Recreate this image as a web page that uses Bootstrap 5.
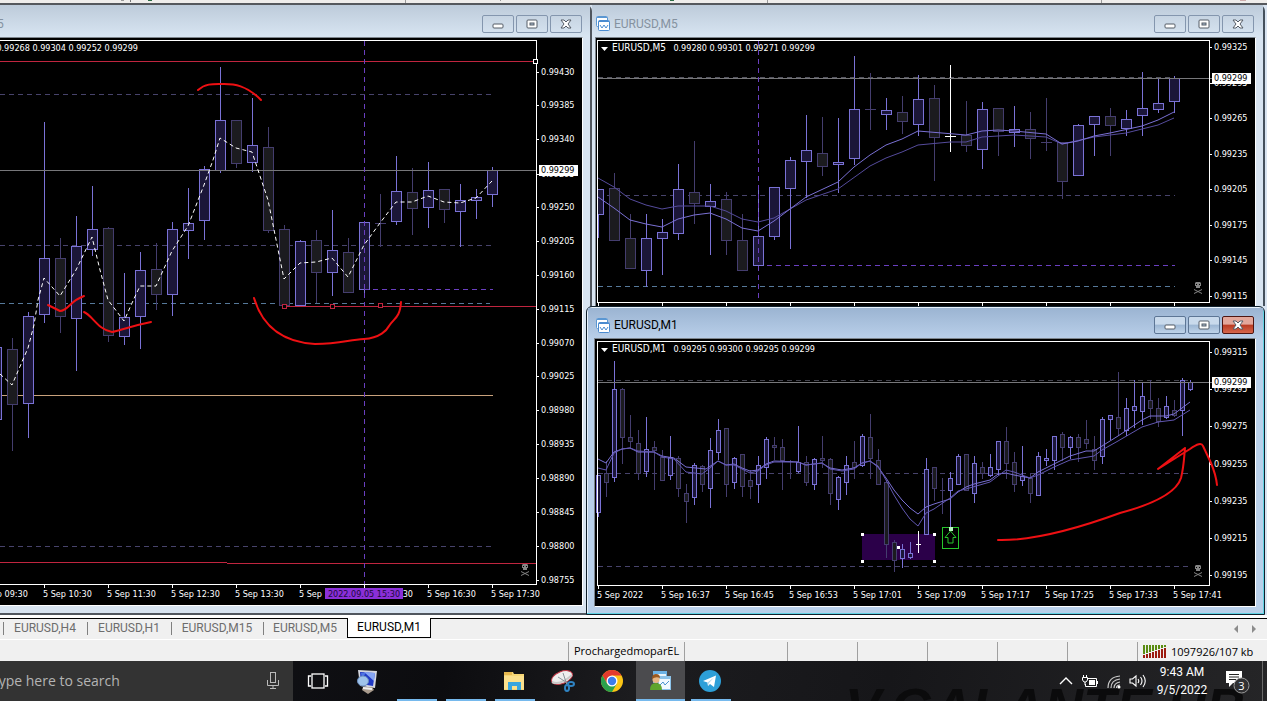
<!DOCTYPE html>
<html lang="en">
<head>
    <meta charset="UTF-8">
    <title>EURUSD Charts</title>
    <meta name="viewport" content="width=device-width, initial-scale=1">
    <!-- Bootstrap 5 -->
    <link href="https://cdn.jsdelivr.net/npm/bootstrap@5.3.3/dist/css/bootstrap.min.css" rel="stylesheet">
    <!-- Custom Styles -->
    <style>
        body {
            background: #f0f0f0;
            font-family: "Open Sans", "Noto Sans", sans-serif;
            font-size: 11px;
            line-height: 16px;
            color: #000;
            overflow-x: hidden;
        }
        .tool-strip { height: 5px; background: #efedeb; border-bottom: 2px solid #55585d; }
        .tool-strip svg { display: block; }

        /* chart windows */
        .workspace { padding-right: 2px; background: #d9e4f1; }
        .pane-left { flex: 592 1 0; min-width: 0; }
        .pane-right { flex: 673 1 0; min-width: 0; }
        .win { background: #d8e4f1; }
        .win-left { border-right: 2px solid #50565e; border-bottom: 2px solid #50565e; border-top-right-radius: 6px; padding: 0 7px 7px 0; }
        .win-m5 { border-right: 2px solid #45505c; border-top-right-radius: 6px; padding: 0 7px 0 3px; }
        .win-m1 {
            margin-left: -6px;
            background: #b9d0ea;
            border: 1px solid #10202c;
            border-radius: 6px 6px 0 0;
            box-shadow: inset -1px -1px 0 #5fd3e4, inset 1px 1px 0 #e8f2fc;
            padding: 0 8px 7px 7px;
            position: relative;
        }
        .win-title { height: 32px; padding: 5px 1px 0 2px; background: linear-gradient(#bdcbda, #d8e5f2); color: #8592a0; font-family: Roboto, "Open Sans", sans-serif; font-size: 12px; }
        .win-left .win-title { margin-right: -7px; padding-right: 8px; }
        .win-m5 .win-title { margin: 0 -7px 0 -3px; padding: 5px 9px 0 4px; }
        .win-m1 .win-title { height: 30px; margin: 1px -7px 0 -6px; padding: 4px 9px 0 8px; background: linear-gradient(#9bb4d2, #b9cfe9); color: #000; }
        .cut-title { margin-left: -62px; }
        .chart-box { border-top: 1px solid #7d858d; border-right: 1px solid #fff; background: #000; }
        .chart-edge { border-left: 1px solid #7d858d; }
        .chart-base { border-bottom: 1px solid #fff; }
        .chart-box svg { display: block; width: 100%; height: auto; }
        .win-btn { width: 32px; height: 18px; padding: 0; border: 1px solid #8496ae; border-radius: 2px; background: transparent; line-height: 0; }
        .win-m1 .win-btn { border-color: #5d7695; background: linear-gradient(#c9daec 45%, #9cb6d3 50%, #bfd4ea); }
        .win-m1 .win-btn.win-close { border-color: #4e1612; background: linear-gradient(#e3a79b 45%, #b93a22 50%, #d6674c); }
        .win-gap { gap: 2px; }
        .chart-box text { font-family: "DejaVu Sans Condensed", "DejaVu Sans", sans-serif; font-size: 9px; fill: #fff; }
        .chart-box text.symbol-name { font-size: 10px; }

        /* tab row and status bar */
        .tab-row { margin-top: 3px; height: 21px; border-top: 1px solid #000; box-shadow: 0 -3px 0 #fff; }
        .chart-tabs { padding-left: 3px; }
        .chart-tab { width: 84px; height: 19px; padding: 0; border: 0; background: none; color: #6d6d6d; text-align: center; font-family: Roboto, "Open Sans", sans-serif; font-size: 12px; line-height: 19px; position: relative; }
        .chart-tab::before { content: ""; position: absolute; left: 0; top: 3px; height: 13px; border-left: 1px solid #808080; }
        .chart-tab.tab-wide { width: 92px; }
        .chart-tab.tab-on { background: #fff; color: #000; border: 1px solid #000; border-top: 0; height: 20px; margin-top: -1px; }
        .chart-tab.tab-on::before { display: none; }
        .tab-arrow { border: 0; padding: 0; background: none; color: #8c8c8c; width: 18px; line-height: 0; }
        .status-row { height: 22px; border-top: 1px solid #fff; }
        .status-cell { flex: none; height: 19px; margin-top: 2px; border-left: 1px solid #a0a0a0; line-height: 18px; white-space: nowrap; }
        .cell-a { width: 116px; padding-left: 5px; }
        .cell-b { width: 103px; }
        .cell-c { width: 70px; }
        .cell-d { width: 130px; padding-left: 5px; }

        /* taskbar */
        .taskbar { height: 40px; background: linear-gradient(100deg, #15161b, #0c0c0f 35%, #1c1c1f 50%, #161619 70%, #252527); color: #fff; position: relative; overflow: hidden; }
        .desk-name { position: absolute; right: 22px; bottom: -33px; font: italic bold 54px/54px "Liberation Sans", sans-serif; color: #0b0b0c; }
        .search-box { width: 293px; background: #333; }
        .search-box input { width: 240px; border: 0; background: transparent; color: #b4b4b4; font-size: 14px; text-indent: -9px; padding: 0; outline: 0; }
        .search-box input::placeholder { color: #b4b4b4; opacity: 1; }
        .search-box button { margin-right: 13px; }
        .task-btn, .tray-btn { border: 0; padding: 0; background: none; color: #fff; display: flex; align-items: center; justify-content: center; position: relative; }
        .task-btn { width: 49px; height: 40px; }
        .task-btn.running::after { content: ""; position: absolute; left: 6px; right: 3px; bottom: 0; height: 2px; background: #76b9ed; }
        .task-btn.active-app { background: #4b4b4e; }
        .task-btn.active-app::after { left: 0; right: 0; }
        .tray-btn { width: 24px; height: 40px; }
        .clock { width: 64px; font-size: 12px; line-height: 18px; text-align: center; padding-top: 2px; font-family: Roboto, "Open Sans", sans-serif; position: relative; }
        .note-btn { width: 48px; }
        .show-desk { width: 5px; border-left: 1px solid #6a6a6a; }
    </style>
</head>
<body>
    <div class="tool-strip">
        <svg width="1267" height="3" shape-rendering="crispEdges" aria-hidden="true">
            <rect x="148" width="4" height="1" fill="#2c6a44"/><rect x="121" width="3" height="1" fill="#999"/><rect x="130" width="1" height="2" fill="#777"/>
            <rect x="405" width="1" height="3" fill="#999"/><rect x="500" width="1" height="1" fill="#999"/><rect x="670" width="4" height="1" fill="#2c6a44"/>
            <rect x="767" width="1" height="3" fill="#999"/><rect x="1101" width="1" height="3" fill="#999"/><rect x="1240" width="6" height="1" fill="#caa"/>
        </svg>
    </div>

    <main class="workspace d-flex">
        <!-- Left chart -->
        <section class="pane-left d-flex flex-column">
            <div class="win win-left">
                <div class="win-title d-flex align-items-center justify-content-between">
                    <span class="cut-title">EURUSD,M5</span>
                    <div class="win-buttons d-flex win-gap"></div>
                </div>
                <div class="chart-box chart-base"><svg id="chart-left" viewBox="0 38 582 567" role="img" aria-label="EURUSD chart"></svg></div>
            </div>
        </section>

        <section class="pane-right d-flex flex-column">
            <!-- M5 chart -->
            <div class="win win-m5">
                <div class="win-title d-flex align-items-center justify-content-between">
                    <div class="d-flex align-items-center gap-1"><span class="win-icon d-flex"></span><span>EURUSD,M5</span></div>
                    <div class="win-buttons d-flex win-gap"></div>
                </div>
                <div class="chart-box chart-edge"><svg id="chart-m5" viewBox="596 38 659 268" role="img" aria-label="EURUSD M5 chart"></svg></div>
            </div>
            <!-- M1 chart -->
            <div class="win win-m1">
                <div class="win-title d-flex align-items-center justify-content-between">
                    <div class="d-flex align-items-center gap-1"><span class="win-icon d-flex"></span><span>EURUSD,M1</span></div>
                    <div class="win-buttons d-flex win-gap"></div>
                </div>
                <div class="chart-box chart-edge chart-base"><svg id="chart-m1" viewBox="595 339 660 267" role="img" aria-label="EURUSD M1 chart"></svg></div>
            </div>
        </section>
    </main>

    <!-- Chart tabs -->
    <div class="tab-row d-flex justify-content-between">
        <div class="chart-tabs d-flex">
            <button type="button" class="chart-tab">EURUSD,H4</button>
            <button type="button" class="chart-tab">EURUSD,H1</button>
            <button type="button" class="chart-tab tab-wide">EURUSD,M15</button>
            <button type="button" class="chart-tab">EURUSD,M5</button>
            <button type="button" class="chart-tab tab-on">EURUSD,M1</button>
        </div>
        <div class="d-flex pe-1">
            <button type="button" class="tab-arrow" aria-label="Previous tab"><svg width="4" height="8"><path d="M4 0V8L0 4Z" fill="currentColor"/></svg></button>
            <button type="button" class="tab-arrow" aria-label="Next tab"><svg width="4" height="8"><path d="M0 0V8L4 4Z" fill="currentColor"/></svg></button>
        </div>
    </div>
    <div class="status-row d-flex justify-content-end">
        <div class="status-cell cell-a">ProchargedmoparEL</div>
        <div class="status-cell cell-b"></div>
        <div class="status-cell cell-c"></div>
        <div class="status-cell cell-c"></div>
        <div class="status-cell cell-c"></div>
        <div class="status-cell cell-c"></div>
        <div class="status-cell cell-c"></div>
        <div class="status-cell cell-d d-flex align-items-center gap-1">
            <svg id="net-bars" width="24" height="13" shape-rendering="crispEdges" aria-hidden="true"></svg>
            <span>1097926/107 kb</span>
        </div>
    </div>

    <!-- Taskbar -->
    <footer class="taskbar d-flex">
        <div class="desk-name" aria-hidden="true">V.GALANTE.UB</div>
        <div class="search-box d-flex align-items-center justify-content-between">
            <input type="text" placeholder="Type here to search" aria-label="Type here to search">
            <button type="button" class="tray-btn w-auto" aria-label="Voice search">
                <svg width="14" height="18" fill="none" stroke="#bbb"><rect x="4.500" y=".5" width="5" height="10"/><path d="M1.500 8v5.500h11V8M7 13.500v3M4 16.500h6"/></svg>
            </button>
        </div>
        <button type="button" class="task-btn" aria-label="Task view">
            <svg width="22" height="16" fill="none" stroke="#fff" stroke-width="1.300"><rect x="5" y="1" width="12" height="14"/><path d="M4 3H1.500v10H4M18 3h2.500v10H18"/></svg>
        </button>
        <button type="button" class="task-btn" aria-label="Remote computer">
            <svg width="24" height="26"><path d="M3 2l19 1-2 17L5 18Z" fill="#d4d6de"/><path d="M5 4l15 1-2 13L6 16Z" fill="#2039c4"/><path d="M9 4l11 1-1 8Z" fill="#86a5f3"/><path d="M6 5l5 0-4 5Z" fill="#4e74e4"/><ellipse cx="8" cy="13" rx="5.500" ry="5" fill="#9fc3ea" stroke="#6c8fc0"/><path d="M8 19h9l2 3-6 4-6-4Z" fill="#a99b8d"/><path d="M8 20l9 1" stroke="#eee" stroke-width="2"/></svg>
        </button>
        <button type="button" class="task-btn running" aria-label="Application"></button>
        <button type="button" class="task-btn running" aria-label="Application"></button>
        <button type="button" class="task-btn running" aria-label="File Explorer">
            <svg width="22" height="20"><path d="M1 1h9l1 2h10v16H1Z" fill="#f6d675"/><path d="M1 1h8v3H1Z" fill="#e6b84e"/><path d="M1 5h20v13H1Z" fill="#fbe08c"/><path d="M5 19v-8h13v8h-4v-4H9v4Z" fill="#38a5de"/></svg>
        </button>
        <button type="button" class="task-btn" aria-label="Snipping Tool">
            <svg width="24" height="24"><ellipse cx="11" cy="8.500" rx="11" ry="6" transform="rotate(-22 11 8.500)" fill="#eee" stroke="#c23a4a"/><path d="M1 13q8 4 20-7" stroke="#c9c9c9" fill="none" stroke-width="2"/><path d="M12 4l4 12M7 8l11 7" stroke="#8a949b"/><g fill="none" stroke="#2f83c3" stroke-width="2"><ellipse cx="16" cy="19" rx="2" ry="3"/><ellipse cx="20" cy="15" rx="3" ry="2"/></g></svg>
        </button>
        <button type="button" class="task-btn" aria-label="Chrome">
            <svg width="22" height="22" viewBox="0 0 22 22"><circle cx="11" cy="11" r="11" fill="#fbc516"/><path d="M1.470 5.500A11 11 0 0 1 20.530 5.500H11L6.240 13.750Z" fill="#e33b2e"/><path d="M1.470 5.500A11 11 0 0 0 11 22L15.760 13.750H6.240Z" fill="#2aa14b"/><circle cx="11" cy="11" r="5.500" fill="#fff"/><circle cx="11" cy="11" r="4.200" fill="#3b7ded"/></svg>
        </button>
        <button type="button" class="task-btn running active-app" aria-label="Trading terminal">
            <svg width="22" height="22"><rect x="3" y="1" width="14" height="12" fill="#6db3e6"/><rect x="4" y="4" width="12" height="8" fill="#e9f5fd"/><rect x="8" y="6" width="13" height="14" fill="#8cc3ea"/><rect x="9" y="9" width="11" height="10" fill="#f1f8fe"/><path d="M10 15l3-3 2 3 4-4" stroke="#4b93cf" fill="none"/><path d="M0 20q0-7 6-7t6 7Z" fill="#5fa52d"/><circle cx="6" cy="9.500" r="3.500" fill="#e8b683"/><path d="M2 9q0-5 4-5t4 4q-4-2-8 1" fill="#9c5a20"/></svg>
        </button>
        <button type="button" class="task-btn running" aria-label="Telegram">
            <svg width="22" height="22"><circle cx="11" cy="11" r="11" fill="#2d9fd8"/><path d="M4 11L17 5.500 15 17l-4-3-2 2-.500-3.500Z" fill="#fff"/><path d="M8.500 12.500L15 7.500 10 13l-1 3Z" fill="#b5d7ea"/></svg>
        </button>
        <div class="ms-auto d-flex">
            <button type="button" class="tray-btn" aria-label="Hidden icons"><svg width="14" height="8" fill="none" stroke="#fff" stroke-width="1.400"><path d="M1 7l6-6 6 6"/></svg></button>
            <button type="button" class="tray-btn" aria-label="Battery"><svg width="18" height="14" fill="none" stroke="#fff"><path d="M7 4.500h8.500v8h-11V10M16.500 7v3"/><rect x="8" y="6" width="6" height="5" fill="#fff" stroke="none"/><path d="M2.500 1v2M5.500 1v2M1.500 3.500h5V6L5 8H3L1.500 6ZM4 8v3"/></svg></button>
            <button type="button" class="tray-btn" aria-label="Network"><svg width="15" height="15" fill="none" stroke="#ccc" stroke-width="1.200"><path d="M1 14Q1 3 13 2M4 14q0-8 9-9M7 14q0-5 6-6M9.500 14q0-3 3.500-3"/><circle cx="12" cy="13" r="1.500" fill="#fff" stroke="none"/></svg></button>
            <button type="button" class="tray-btn" aria-label="Volume"><svg width="18" height="14" fill="none" stroke="#fff" stroke-width="1.100"><path d="M1 5h2.500L7 2v10L3.500 9H1ZM9 5q1.500 2 0 4M11.500 3q3 4 0 8M14 1q4.500 6 0 12"/></svg></button>
            <div class="clock">9:43 AM<br>9/5/2022</div>
            <button type="button" class="tray-btn note-btn" aria-label="3 notifications">
                <svg width="26" height="26"><path d="M1 3h16v12H8l-4 4v-4H1Z" fill="#fff"/><path d="M4 6.500h10M4 9h10M4 11.500h7" stroke="#222"/><circle cx="16.500" cy="17.500" r="7.500" fill="#303032" stroke="#999"/><text x="16.500" y="21.500" text-anchor="middle" font-size="11" fill="#fff">3</text></svg>
            </button>
            <div class="show-desk"></div>
        </div>
    </footer>

    <!-- Bootstrap JS + Popper -->
    <script src="https://cdn.jsdelivr.net/npm/bootstrap@5.3.3/dist/js/bootstrap.bundle.min.js"></script>
    <script>
        // Title bar buttons and window icons
        document.querySelectorAll('.win-buttons').forEach(el => {
            el.innerHTML =
                '<button type="button" class="win-btn" aria-label="Minimize"><svg width="12" height="12"><rect x="1" y="6" width="10" height="4" rx="1" fill="#fff" stroke="#555c66"/></svg></button>' +
                '<button type="button" class="win-btn" aria-label="Maximize"><svg width="12" height="12"><rect x="1" y="2" width="10" height="8" rx="1" fill="#fff" stroke="#555c66"/><rect x="4" y="5" width="4" height="2" fill="#a9bcd0" stroke="#555c66"/></svg></button>' +
                '<button type="button" class="win-btn win-close" aria-label="Close"><svg width="12" height="12"><path d="M1 2h3l2 2 2-2h3L8 6l3 4H8L6 8l-2 2H1l3-4Z" fill="#fff" stroke="#555c66"/></svg></button>';
        });
        document.querySelectorAll('.win-icon').forEach(el => {
            el.innerHTML = '<svg width="14" height="15"><rect x=".5" y=".5" width="11" height="10" rx="1" fill="#fff" stroke="#5b97d2"/><path d="M1 1.500h10" stroke="#5b97d2"/><path d="M2 6l2-2 2 2 2-2" stroke="#5b97d2" fill="none"/><rect x="2.500" y="4.500" width="11" height="10" rx="1" fill="#fff" stroke="#4a8bd0"/><path d="M3 5.500h10" stroke="#4a8bd0"/><path d="M4 9l2 3 2-3 2 3 2-3" stroke="#4a8bd0" fill="none"/></svg>';
        });

        // Traffic meter in the status bar
        let bars = '';
        for (let i = 0; i < 8; i++) {
            const split = 9 - i;
            bars += `<rect x="${i * 3}" y="0" width="2" height="${split}" fill="#5a8c12"/><rect x="${i * 3}" y="${split + 1}" width="2" height="${12 - split}" fill="#9c1c10"/>`;
        }
        document.getElementById('net-bars').innerHTML = bars;

        const GREY = '#77777a', DASH = '#47436b', STEEL = '#56799a', PURPLE = '#6a3fc0', CRIMSON = '#c0253f';

        // Drawing helpers, each returns an SVG string
        function hline(x1, x2, y, color, dash) {
            return `<path d="M${x1} ${y + .5}H${x2}" stroke="${color}" ${dash ? 'stroke-dasharray="5 4"' : ''} fill="none" shape-rendering="crispEdges"/>`;
        }
        function vline(x, y1, y2, color, dash) {
            return `<path d="M${x + .5} ${y1}V${y2}" stroke="${color}" ${dash ? 'stroke-dasharray="5 4"' : ''} fill="none" shape-rendering="crispEdges"/>`;
        }
        function curve(points, color, dash) {
            return `<polyline points="${points}" fill="none" stroke="${color}" ${dash ? 'stroke-dasharray="4 3"' : ''}/>`;
        }
        function ink(d) {
            return `<path d="${d}" fill="none" stroke="#ee1013" stroke-width="2" stroke-linecap="round" stroke-linejoin="round"/>`;
        }
        function label(x, y, text, extra) {
            return `<text x="${x}" y="${y + 3}" ${extra || ''}>${text}</text>`;
        }
        function handle(x, y, color, fill) {
            return `<rect x="${x - 1.5}" y="${y - 1.5}" width="4" height="4" fill="${fill}" stroke="${color}" shape-rendering="crispEdges"/>`;
        }
        // rows: [high, body top, body bottom, low, rising]
        function candles(rows, x0, step, half) {
            return '<g shape-rendering="crispEdges">' + rows.map((r, i) => {
                const x = x0 + i * step;
                const line = r[4] === 2 ? '#fff' : r[4] ? '#7a72d6' : '#443d6e';
                const fill = r[4] ? '#1b1638' : '#1b1b1f';
                let s = `<path d="M${x + .5} ${r[0]}V${r[1]}M${x + .5} ${r[2]}V${r[3] + 1}" stroke="${line}"/>`;
                if (r[2] - r[1] < 2) s += `<path d="M${x - half} ${r[1] + .5}H${x + half + 1}" stroke="${line}"/>`;
                else s += `<rect x="${x - half + .5}" y="${r[1] + .5}" width="${half * 2}" height="${r[2] - r[1]}" fill="${fill}" stroke="${line}"/>`;
                return s;
            }).join('') + '</g>';
        }
        function scale(x, rows) {
            return rows.map(([y, t]) => hline(x, x + 3, y, '#fff') + label(x + 5, y, t)).join('');
        }
        function priceTag(x, y) {
            return `<rect x="${x}" y="${y - 5}" width="39" height="11" fill="#fff"/>` + label(x + 2, y, '0.99299', 'style="fill:#000"');
        }
        function skull(x, y) {
            return `<g transform="translate(${x} ${y})"><path d="M-2-6h4l1 1v3h-1v2h-4v-2h-1v-3Z" fill="#858585"/><path d="M-2-4h1v1h-1ZM1-4h1v1h-1Z" fill="#000"/><path d="M-4 1.500l8 4M4 1.500l-8 4" fill="none" stroke="#858585"/></g>`;
        }

        // Left chart
        const left = [
            [340,347,419,425,1],[338,349,404,450,0],[312,316,403,437,1],[122,258,314,322,1],[238,258,316,332,0],[216,246,318,370,1],
            [186,229,249,255,1],[227,228,335,341,0],[273,317,336,344,1],[252,270,316,348,1],[243,269,294,309,0],[222,229,294,315,1],
            [188,223,230,258,1],[166,169,220,239,1],[67,120,170,172,1],[120,120,163,167,0],[98,145,162,171,1],[127,147,230,232,0],
            [225,229,305,306,0],[240,241,305,306,1],[230,240,272,302,0],[210,250,272,295,1],[238,252,292,292,0],[222,222,289,292,1],
            [194,223,224,246,0],[156,191,221,224,1],[168,192,208,234,0],[162,190,207,227,1],[189,189,209,222,0],[184,200,211,246,1],
            [189,197,200,218,1],[167,170,194,206,1]
        ];
        const leftTimes = [[-21,'5 Sep 09:30'],[43,'5 Sep 10:30'],[107,'5 Sep 11:30'],[171,'5 Sep 12:30'],[235,'5 Sep 13:30'],[299,'5 Sep'],[427,'5 Sep 16:30'],[491,'5 Sep 17:30']];
        const leftPrices = [[72,'0.99430'],[105,'0.99385'],[139,'0.99340'],[174,'0.99295'],[207,'0.99250'],[241,'0.99205'],[275,'0.99160'],[309,'0.99115'],
            [343,'0.99070'],[376,'0.99025'],[410,'0.98980'],[444,'0.98935'],[478,'0.98890'],[512,'0.98845'],[546,'0.98800'],[580,'0.98755']];
        document.getElementById('chart-left').innerHTML =
            hline(0, 536, 61, CRIMSON) + hline(0, 493, 94, DASH, true) + hline(0, 493, 245, DASH, true) + hline(0, 490, 303, STEEL, true) +
            hline(0, 493, 395, '#c9a27c') + hline(0, 493, 546, DASH, true) + hline(0, 227, 562, CRIMSON) + hline(227, 536, 563, CRIMSON) +
            candles(left, -4, 16, 5) + hline(0, 536, 170, GREY) + hline(364, 493, 289, PURPLE, true) + vline(364, 41, 584, PURPLE, true) +
            hline(284, 536, 306, CRIMSON) + handle(284, 306, CRIMSON, '#000') + handle(332, 306, CRIMSON, '#000') + handle(380, 305, CRIMSON, '#000') +
            curve('0,374 12,385 28,348 34,325 38,300 44,278 60,296 76,270 92,237 100,270 108,300 124,321 132,303 140,286 156,286 172,251 188,226 204,185 213,160 220,138 236,148 252,152 268,200 284,279 300,263 316,262 332,258 348,277 364,245 380,223 396,202 412,202 428,196 444,202 460,203 476,198 492,181', '#fff', true) +
            hline(0, 537, 40, '#fff') + vline(536, 40, 585, '#fff') + hline(0, 537, 584, '#fff') + handle(535, 61, '#fff', '#000') +
            [44,108,172,236,300,364,428,492].map(x => vline(x, 585, 588, '#fff')).join('') +
            scale(536, leftPrices) + priceTag(539, 170) +
            leftTimes.map(([x, t]) => label(x, 594, t)).join('') + label(413, 594, '30', 'text-anchor="end"') +
            '<rect x="325" y="588" width="78" height="11" fill="#8a2fd8"/>' + label(364, 594, '2022.09.05 15:30', 'text-anchor="middle" style="fill:#1b0b3a"') +
            label(138, 48, '0.99268 0.99304 0.99252 0.99299', 'text-anchor="end"') + skull(525, 570) +
            ink('M198 90C206 83 214 84 224 84S246 85 261 100') + ink('M48 305L60 311Q64 311 70 305T84 296') +
            ink('M84 312C92 315 98 330 112 332C120 331 126 327 151 322') +
            ink('M254 298C262 325 280 342 315 344C340 344 348 340 364 339C380 338 387 330 389 326C394 318 400 318 401 302');

        // M5 chart
        const m5 = [
            [189,189,214,237,1],[173,188,240,240,0],[214,238,268,268,0],[214,238,270,286,1],[219,232,238,274,1],[164,189,233,239,1],[141,192,203,223,0],
            [184,201,206,254,1],[192,199,240,254,0],[214,240,270,270,0],[185,236,265,268,1],[187,187,236,239,1],[157,160,188,248,1],[115,150,161,197,1],
            [117,153,166,175,0],[118,162,164,192,1],[56,109,158,164,1],[73,109,110,129,0],[98,110,114,129,1],[96,112,121,133,0],[75,99,124,135,1],
            [85,98,137,180,0],[65,136,137,151,2],[101,135,145,151,0],[102,109,149,168,1],[108,108,131,155,0],[106,129,132,146,1],[112,129,138,158,0],
            [98,142,143,150,0],[142,142,181,198,0],[124,125,175,175,1],[116,116,124,155,1],[108,116,125,155,0],[110,119,128,135,1],[72,108,115,135,1],
            [78,103,109,112,1],[76,78,101,112,1]
        ];
        const ticks = [598,662,726,790,854,918,982,1046,1110,1174];
        document.getElementById('chart-m5').innerHTML =
            hline(598, 1175, 77, '#555560', true) + hline(598, 1175, 195, DASH, true) + hline(758, 1175, 265, PURPLE, true) + hline(598, 1175, 286, STEEL, true) +
            candles(m5, 598, 16, 5) + hline(598, 1212, 78, GREY) + vline(758, 41, 302, PURPLE, true) +
            curve('598,178 614,187 630,199 646,205 662,209 678,206 694,206 710,206 726,211 742,219 758,222 774,218 790,209 806,200 838,189 870,166 886,158 902,152 918,145 950,142 966,142 982,137 1014,135 1046,137 1062,144 1094,137 1126,133 1142,129 1158,125 1174,118', '#554b9c') +
            curve('598,197 614,208 630,220 646,224 662,227 678,219 694,215 710,213 726,219 742,228 758,231 774,221 790,209 806,197 838,182 854,167 870,155 886,145 902,139 918,131 966,135 982,131 998,130 1014,131 1046,134 1062,144 1078,141 1094,136 1110,133 1142,126 1158,120 1174,112', '#7a70d4') +
            '<rect x="596" y="41" width="1" height="261"/>' +
            hline(597, 1210, 40, '#fff') + vline(597, 40, 303, '#fff') + vline(1209, 40, 303, '#fff') + hline(597, 1210, 302, '#fff') +
            ticks.map(x => vline(x, 303, 306, '#fff')).join('') +
            scale(1209, [[47,'0.99325'],[83,'0.99295'],[118,'0.99265'],[154,'0.99235'],[189,'0.99205'],[225,'0.99175'],[260,'0.99145'],[296,'0.99115']]) + priceTag(1212, 78) +
            '<path d="M601 47h7l-3.500 4Z" fill="#fff"/>' + label(612, 48, 'EURUSD,M5', 'class="symbol-name"') + label(815, 48, '0.99280 0.99301 0.99271 0.99299', 'text-anchor="end"') + skull(1198, 288);

        // M1 chart
        const m1 = [
            [475,475,512,516,1],[461,473,482,496,0],[361,389,477,481,1],[388,389,437,463,0],[415,437,441,448,0],[430,443,473,479,0],[417,449,471,476,1],
            [441,447,450,489,0],[450,457,480,480,0],[436,457,475,479,1],[456,458,488,496,0],[484,493,501,522,0],[463,465,497,504,1],[465,466,484,491,0],
            [438,450,488,507,1],[419,430,452,459,1],[428,428,484,496,0],[457,458,482,488,1],[454,454,486,496,0],[470,480,486,498,0],[456,465,484,502,1],
            [437,439,467,478,1],[437,445,447,459,0],[439,447,460,489,0],[460,461,462,478,0],[426,462,471,472,1],[456,462,482,485,0],[458,459,484,489,1],
            [436,458,460,467,0],[458,459,493,504,0],[476,477,499,509,1],[456,465,482,494,1],[441,462,467,478,0],[434,436,465,466,1],[414,437,458,478,0],
            [449,460,484,484,0],[480,482,544,557,0],[540,542,560,571,0],[544,549,558,567,1],[542,553,557,558,1],[531,544,545,552,2],[458,469,534,534,1],
            [467,467,488,500,0],[478,490,491,513,0],[472,478,490,528,1],[454,456,484,484,1],[454,454,490,490,0],[456,463,493,502,1],[462,467,473,478,0],
            [454,467,475,476,1],[441,441,469,474,1],[427,441,463,478,0],[452,462,484,491,0],[446,476,480,485,1],[473,478,493,502,0],[452,456,495,495,1],
            [449,458,460,465,1],[436,436,460,469,1],[432,434,447,460,0],[436,437,447,458,1],[434,437,447,461,0],[420,439,443,448,0],[436,449,460,469,0],
            [417,419,456,463,1],[415,415,419,439,1],[372,417,428,435,0],[398,408,430,435,1],[380,406,410,427,1],[383,396,411,424,1],[380,400,408,418,0],
            [398,408,421,426,0],[396,406,417,418,1],[400,410,415,416,0],[378,380,410,435,1],[380,382,389,390,1]
        ];
        const times = ['2022','16:37','16:45','16:53','17:01','17:09','17:17','17:25','17:33','17:41'];
        document.getElementById('chart-m1').innerHTML =
            '<rect x="862" y="534" width="73" height="26" fill="#2b0049"/>' +
            hline(598, 1191, 380, '#45454f', true) + hline(598, 1191, 473, DASH, true) + hline(598, 1191, 566, DASH, true) +
            candles(m1, 598, 8, 2) + hline(598, 1212, 382, GREY) +
            curve('598,459 606,463 614,452 622,449 630,448 638,452 654,452 662,456 674,458 686,467 706,469 718,461 726,465 734,464 742,468 750,471 758,470 766,464 774,461 798,462 806,465 822,463 830,468 842,470 854,468 862,463 870,461 878,467 886,478 894,490 902,500 910,508 918,514 926,507 934,504 950,499 958,492 966,487 974,484 990,480 998,474 1006,473 1014,475 1030,478 1038,472 1054,464 1070,456 1086,451 1094,451 1102,446 1118,436 1142,420 1150,416 1166,416 1174,414 1182,408 1190,402', '#7a70d4') +
            curve('598,468 606,470 614,453 622,449 630,448 638,451 654,452 662,457 674,459 686,472 702,474 710,468 718,461 726,465 734,465 742,469 750,473 758,471 766,465 774,462 798,462 806,465 822,463 830,469 842,471 854,469 862,463 870,461 878,466 886,480 894,495 902,508 910,519 918,526 926,513 934,509 950,498 958,491 966,489 990,482 1006,470 1014,472 1030,478 1038,475 1054,467 1070,460 1094,456 1102,450 1118,441 1142,427 1158,422 1174,420 1190,410', '#6157b0') +
            [[862,534],[862,561],[934,534],[934,561],[898,547]].map(([x, y]) => `<rect x="${x - 1}" y="${y - 1}" width="3" height="3" fill="#fff"/>`).join('') +
            '<rect x="942.500" y="527.500" width="16" height="21" fill="none" stroke="#27c52c"/><path d="M950.500 531L956 537.500H953V543H948V537.500H945Z" fill="none" stroke="#27c52c"/><rect x="949" y="527" width="4" height="4" fill="#b9f6c0"/>' +
            hline(597, 1210, 341, '#fff') + vline(597, 341, 586, '#fff') + vline(1209, 341, 586, '#fff') + hline(597, 1210, 585, '#fff') +
            ticks.map((x, i) => vline(x, 586, 589, '#fff') + label(x - 1, 595, '5 Sep ' + times[i])).join('') +
            scale(1209, [[352,'0.99315'],[389,'0.99295'],[426,'0.99275'],[464,'0.99255'],[501,'0.99235'],[538,'0.99215'],[575,'0.99195']]) + priceTag(1212, 382) +
            '<path d="M601 348h7l-3.500 4Z" fill="#fff"/>' + label(612, 349, 'EURUSD,M1', 'class="symbol-name"') + label(815, 349, '0.99295 0.99300 0.99295 0.99299', 'text-anchor="end"') + skull(1198, 571) +
            ink('M998 540C1040 541 1090 524 1120 513C1150 505 1176 494 1181 478C1184 466 1184 458 1185 448L1158 469L1190 449Q1201 441 1203 446L1211 463Q1216 475 1217 485');
    </script>
</body>
</html>
